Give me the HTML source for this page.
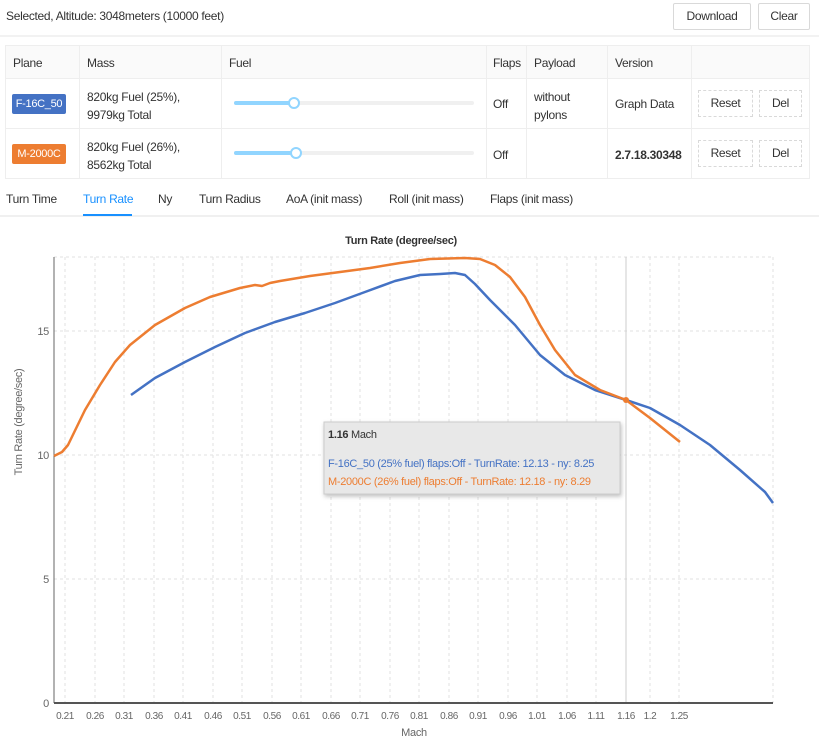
<!DOCTYPE html>
<html><head><meta charset="utf-8"><style>
*{box-sizing:border-box}
body{margin:0;width:819px;height:750px;background:#fff;font-family:"Liberation Sans",sans-serif;font-size:12px;color:#333;position:relative;overflow:hidden;letter-spacing:-0.3px}
.a{position:absolute}
.btn{position:absolute;border:1px solid #d9d9d9;border-radius:2px;background:#fff;font-size:12px;text-align:center;line-height:25px;height:27px}
.dbtn{position:absolute;border:1px dashed #d9d9d9;background:#fff;font-size:12px;text-align:center;line-height:25px;height:27px}
.tag{position:absolute;color:#fff;font-size:11px;text-align:center;line-height:20px;height:20px;border-radius:2px}
.tab{position:absolute;top:192px;font-size:12px;color:#333}
</style></head><body>
<div class="a" style="left:6px;top:9px;font-size:12px">Selected, Altitude: 3048meters (10000 feet)</div>
<div class="btn" style="left:673px;top:3px;width:78px">Download</div>
<div class="btn" style="left:758px;top:3px;width:52px">Clear</div>
<div class="a" style="left:0;top:35px;width:819px;height:2px;background:#f2f2f2"></div>
<div class="a" style="left:5px;top:45px;width:805px;height:134px;border:1px solid #eee"></div>
<div class="a" style="left:6px;top:46px;width:803px;height:32px;background:#fafafa"></div>
<div class="a" style="left:6px;top:78px;width:803px;height:1px;background:#eee"></div>
<div class="a" style="left:6px;top:128px;width:803px;height:1px;background:#eee"></div>
<div class="a" style="left:79px;top:46px;width:1px;height:132px;background:#eee"></div>
<div class="a" style="left:221px;top:46px;width:1px;height:132px;background:#eee"></div>
<div class="a" style="left:486px;top:46px;width:1px;height:132px;background:#eee"></div>
<div class="a" style="left:526px;top:46px;width:1px;height:132px;background:#eee"></div>
<div class="a" style="left:607px;top:46px;width:1px;height:132px;background:#eee"></div>
<div class="a" style="left:691px;top:46px;width:1px;height:132px;background:#eee"></div>
<div class="a" style="left:13px;top:56px">Plane</div>
<div class="a" style="left:87px;top:56px">Mass</div>
<div class="a" style="left:229px;top:56px">Fuel</div>
<div class="a" style="left:493px;top:56px">Flaps</div>
<div class="a" style="left:534px;top:56px">Payload</div>
<div class="a" style="left:615px;top:56px">Version</div>
<div class="tag" style="left:12px;top:94px;width:54px;background:#4472c4">F-16C_50</div>
<div class="tag" style="left:12px;top:144px;width:54px;background:#ed7d31">M-2000C</div>
<div class="a" style="left:87px;top:88px;line-height:18px">820kg Fuel (25%),<br>9979kg Total</div>
<div class="a" style="left:87px;top:138px;line-height:18px">820kg Fuel (26%),<br>8562kg Total</div>
<div class="a" style="left:234px;top:101px;width:240px;height:4px;background:#f0f0f0;border-radius:2px"></div>
<div class="a" style="left:234px;top:101px;width:60px;height:4px;background:#91d5ff;border-radius:2px"></div>
<div class="a" style="left:288px;top:97px;width:12px;height:12px;border:2px solid #91d5ff;border-radius:50%;background:#fff"></div>
<div class="a" style="left:234px;top:151px;width:240px;height:4px;background:#f0f0f0;border-radius:2px"></div>
<div class="a" style="left:234px;top:151px;width:62px;height:4px;background:#91d5ff;border-radius:2px"></div>
<div class="a" style="left:290px;top:147px;width:12px;height:12px;border:2px solid #91d5ff;border-radius:50%;background:#fff"></div>
<div class="a" style="left:493px;top:97px">Off</div>
<div class="a" style="left:493px;top:148px">Off</div>
<div class="a" style="left:534px;top:88px;line-height:18px">without<br>pylons</div>
<div class="a" style="left:615px;top:97px">Graph Data</div>
<div class="a" style="left:615px;top:148px;font-weight:bold">2.7.18.30348</div>
<div class="dbtn" style="left:698px;top:90px;width:55px">Reset</div>
<div class="dbtn" style="left:759px;top:90px;width:43px">Del</div>
<div class="dbtn" style="left:698px;top:140px;width:55px">Reset</div>
<div class="dbtn" style="left:759px;top:140px;width:43px">Del</div>
<div class="tab" style="left:6px">Turn Time</div>
<div class="tab" style="left:83px;color:#1890ff">Turn Rate</div>
<div class="tab" style="left:158px">Ny</div>
<div class="tab" style="left:199px">Turn Radius</div>
<div class="tab" style="left:286px">AoA (init mass)</div>
<div class="tab" style="left:389px">Roll (init mass)</div>
<div class="tab" style="left:490px">Flaps (init mass)</div>
<div class="a" style="left:0;top:215px;width:819px;height:2px;background:#f0f0f0"></div>
<div class="a" style="left:83px;top:214px;width:49px;height:2px;background:#1890ff"></div>
<svg class="a" style="left:0;top:0" width="819" height="750" font-family="Liberation Sans, sans-serif">
<text x="401" y="244" font-size="11" font-weight="bold" text-anchor="middle" fill="#333">Turn Rate (degree/sec)</text>
<g stroke="#e2e2e2" stroke-dasharray="3,3" stroke-width="1">
<line x1="54" x2="773" y1="257" y2="257"/><line x1="54" x2="773" y1="331" y2="331"/><line x1="54" x2="773" y1="455" y2="455"/><line x1="54" x2="773" y1="579" y2="579"/>
<line x1="65" x2="65" y1="257" y2="703"/><line x1="95" x2="95" y1="257" y2="703"/><line x1="124" x2="124" y1="257" y2="703"/><line x1="154" x2="154" y1="257" y2="703"/><line x1="183" x2="183" y1="257" y2="703"/><line x1="213" x2="213" y1="257" y2="703"/><line x1="242" x2="242" y1="257" y2="703"/><line x1="272" x2="272" y1="257" y2="703"/><line x1="301" x2="301" y1="257" y2="703"/><line x1="331" x2="331" y1="257" y2="703"/><line x1="360" x2="360" y1="257" y2="703"/><line x1="390" x2="390" y1="257" y2="703"/><line x1="419" x2="419" y1="257" y2="703"/><line x1="449" x2="449" y1="257" y2="703"/><line x1="478" x2="478" y1="257" y2="703"/><line x1="508" x2="508" y1="257" y2="703"/><line x1="537" x2="537" y1="257" y2="703"/><line x1="567" x2="567" y1="257" y2="703"/><line x1="596" x2="596" y1="257" y2="703"/><line x1="650" x2="650" y1="257" y2="703"/><line x1="679" x2="679" y1="257" y2="703"/><line x1="773" x2="773" y1="257" y2="703"/>
</g>
<line x1="626" x2="626" y1="257" y2="703" stroke="#ccc"/>
<line x1="54" x2="54" y1="257" y2="703" stroke="#666"/>
<line x1="54" x2="773" y1="703" y2="703" stroke="#555" stroke-width="2"/>
<g font-size="11" fill="#666" text-anchor="end">
<text x="49" y="707">0</text><text x="49" y="583">5</text><text x="49" y="459">10</text><text x="49" y="335">15</text></g>
<g font-size="10" fill="#666" text-anchor="middle" letter-spacing="-0.4">
<text x="65" y="719">0.21</text><text x="95" y="719">0.26</text><text x="124" y="719">0.31</text><text x="154" y="719">0.36</text><text x="183" y="719">0.41</text><text x="213" y="719">0.46</text><text x="242" y="719">0.51</text><text x="272" y="719">0.56</text><text x="301" y="719">0.61</text><text x="331" y="719">0.66</text><text x="360" y="719">0.71</text><text x="390" y="719">0.76</text><text x="419" y="719">0.81</text><text x="449" y="719">0.86</text><text x="478" y="719">0.91</text><text x="508" y="719">0.96</text><text x="537" y="719">1.01</text><text x="567" y="719">1.06</text><text x="596" y="719">1.11</text><text x="626" y="719">1.16</text><text x="650" y="719">1.2</text><text x="679" y="719">1.25</text>
</g>
<text x="414" y="736" font-size="11" fill="#666" text-anchor="middle">Mach</text>
<text transform="translate(22,422) rotate(-90)" font-size="11" fill="#666" text-anchor="middle">Turn Rate (degree/sec)</text>
<polyline fill="none" stroke="#4472c4" stroke-width="2.5" stroke-linejoin="round" points="131,395 155,378 185,362 215,347 245,333 275,322 305,313 335,303 365,292 395,281 420,275 440,274 455,273 465,275 475,284 490,300 515,325 540,355 565,375 595,390 626,400 650,408 680,425 710,445 740,470 765,492 773,503"/>
<polyline fill="none" stroke="#ed7d31" stroke-width="2.5" stroke-linejoin="round" points="54,456 62,452 68,445 85,410 100,385 115,362 130,345 155,325 185,308 210,297 240,288 255,285 262,286 270,283 280,281 310,276 340,272 370,268 400,263 430,259 465,258 480,259 495,265 510,277 525,297 540,325 555,350 575,375 600,390 626,400 650,418 680,442"/>
<circle cx="626" cy="400" r="3" fill="#ed7d31"/>
<rect x="324" y="422" width="296" height="72" fill="#e8e8e8" stroke="#ccc" style="filter:drop-shadow(1px 2px 2px rgba(0,0,0,.25))"/>
<text x="328" y="438" font-size="11" fill="#333"><tspan font-weight="bold">1.16</tspan> Mach</text>
<text x="328" y="467" font-size="11" fill="#4472c4">F-16C_50 (25% fuel) flaps:Off - TurnRate: 12.13 - ny: 8.25</text>
<text x="328" y="485" font-size="11" fill="#ed7d31">M-2000C (26% fuel) flaps:Off - TurnRate: 12.18 - ny: 8.29</text>
</svg>
</body></html>
